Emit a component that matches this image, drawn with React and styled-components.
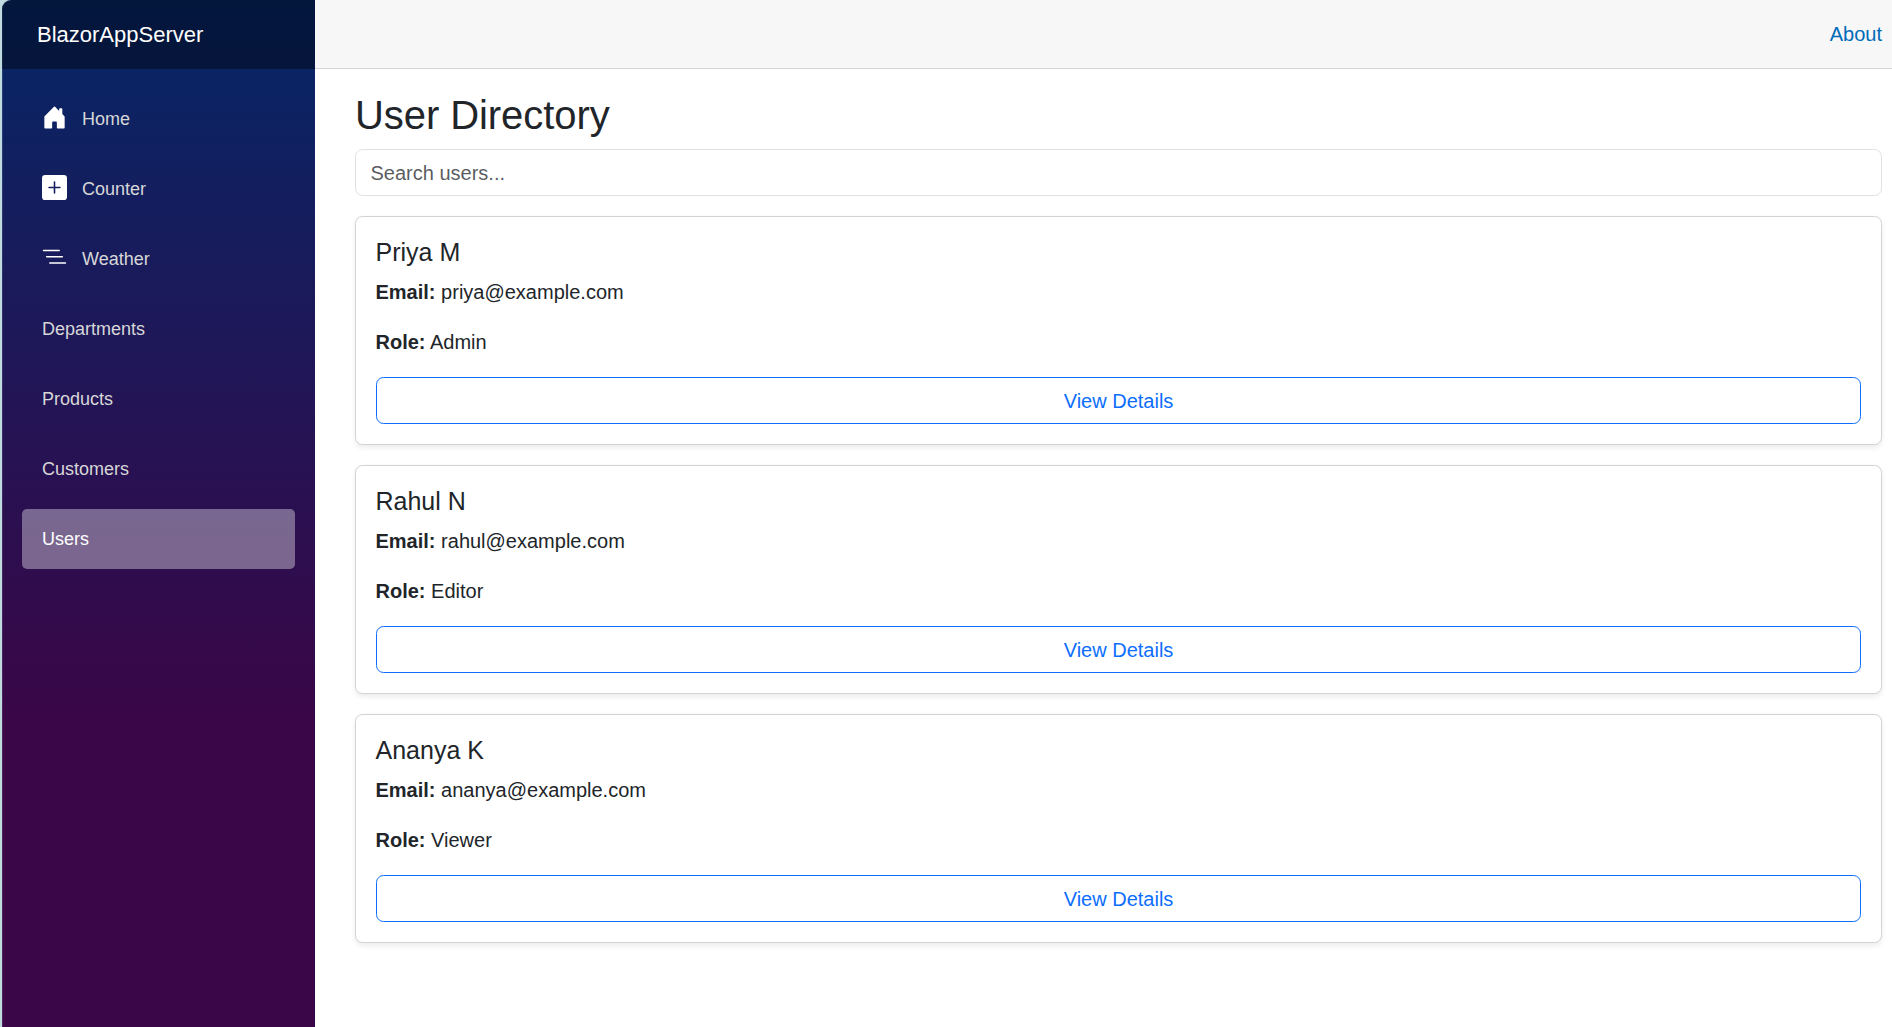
import React from "react";
import styled, { createGlobalStyle } from "styled-components";

const GlobalStyle = createGlobalStyle`
  *, *::before, *::after { box-sizing: border-box; }
  html, body { margin: 0; padding: 0; height: 100%; }
  body {
    background: #fff;
    color: #212529;
    font-family: "Liberation Sans", Arial, sans-serif;
    font-size: 20px;
    line-height: 30px;
    overflow: hidden;
  }
`;

const Page = styled.div`
  display: flex;
  height: 1027px;
  overflow: hidden;
`;

const WindowEdge = styled.div`
  width: 315px;
  flex: none;
  padding-left: 2px;
  background: #c0dbe0;
`;

const Sidebar = styled.aside`
  height: 100%;
  border-top-left-radius: 9px;
  overflow: hidden;
  background: linear-gradient(180deg, rgb(5, 39, 103) 0%, #3a0647 70%);
  box-shadow: inset 1px 0 0 rgba(255, 255, 255, 0.12);
`;

const Brand = styled.div`
  height: 69px;
  padding: 18px 0 0 35px;
  background: rgba(0, 0, 0, 0.4);
  color: #fff;
  font-size: 22px;
  line-height: 34px;
`;

const Nav = styled.nav`
  display: flex;
  flex-direction: column;
  gap: 10px;
  padding: 20px 20px 0;
`;

const NavItem = styled.a`
  display: flex;
  align-items: center;
  gap: 15px;
  height: 60px;
  padding: 0 20px;
  border-radius: 5px;
  font-size: 18px;
  color: ${(p) => (p.$active ? "#fff" : "#d7d7d7")};
  background: ${(p) => (p.$active ? "rgba(255, 255, 255, 0.37)" : "transparent")};
`;

const NavIcon = styled.svg`
  width: 25px;
  height: 25px;
  margin-top: -3px;
  fill: #fff;
`;

const Main = styled.main`
  flex: 1;
  min-width: 0;
`;

const TopRow = styled.header`
  display: flex;
  align-items: center;
  justify-content: flex-end;
  height: 69px;
  padding-right: 10px;
  background: #f7f7f7;
  border-bottom: 1px solid #d6d5d5;
`;

const AboutLink = styled.a`
  color: #006bb7;
`;

const Content = styled.article`
  padding: 22px 10px 0 40px;
`;

const Title = styled.h1`
  margin: 0 0 10px;
  font-size: 40px;
  font-weight: 400;
  line-height: 48px;
  letter-spacing: -0.07px;
`;

const Search = styled.input`
  display: block;
  width: 100%;
  height: 47px;
  margin: 0 0 20px;
  padding: 1px 15px 0 14.5px;
  border: 1px solid #dee2e6;
  border-radius: 7.5px;
  background: #fff;
  font: inherit;
  outline: none;
  &::placeholder {
    color: rgba(33, 37, 41, 0.75);
    opacity: 1;
  }
`;

const CardList = styled.div`
  display: flex;
  flex-direction: column;
  gap: 20px;
`;

const Card = styled.section`
  height: 229px;
  padding: 20px;
  border: 1px solid #d3d3d4;
  border-radius: 7.5px;
  background: #fff;
  box-shadow: 0 2.5px 5px rgba(0, 0, 0, 0.075);
`;

const Name = styled.h5`
  margin: 0 0 10px;
  font-size: 25px;
  font-weight: 400;
  line-height: 30px;
  text-indent: -0.5px;
`;

const Field = styled.p`
  margin: 0 0 20px;
  text-indent: -0.5px;
`;

const Button = styled.button`
  display: block;
  width: 100%;
  height: 47px;
  padding: 0;
  border: 1px solid #0d6efd;
  border-radius: 7.5px;
  background: transparent;
  color: #0d6efd;
  font: inherit;
`;

const icons = {
  home: "M6.5 14.5v-3.505c0-.245.25-.495.5-.495h2c.25 0 .5.25.5.5v3.5a.5.5 0 0 0 .5.5h4a.5.5 0 0 0 .5-.5v-7a.5.5 0 0 0-.146-.354L13 5.793V2.5a.5.5 0 0 0-.5-.5h-1a.5.5 0 0 0-.5.5v1.293L8.354 1.146a.5.5 0 0 0-.708 0l-6 6A.5.5 0 0 0 1.5 7.5v7a.5.5 0 0 0 .5.5h4a.5.5 0 0 0 .5-.5Z",
  plus: "M2 0a2 2 0 0 0-2 2v12a2 2 0 0 0 2 2h12a2 2 0 0 0 2-2V2a2 2 0 0 0-2-2H2zm6.5 4.5v3h3a.5.5 0 0 1 0 1h-3v3a.5.5 0 0 1-1 0v-3h-3a.5.5 0 0 1 0-1h3v-3a.5.5 0 0 1 1 0z",
  list: "M4.5 11.5A.5.5 0 0 1 5 11h10a.5.5 0 0 1 0 1H5a.5.5 0 0 1-.5-.5zm-2-4A.5.5 0 0 1 3 7h10a.5.5 0 0 1 0 1H3a.5.5 0 0 1-.5-.5zm-2-4A.5.5 0 0 1 1 3h10a.5.5 0 0 1 0 1H1a.5.5 0 0 1-.5-.5z",
};

const links = [
  { label: "Home", icon: "home" },
  { label: "Counter", icon: "plus" },
  { label: "Weather", icon: "list" },
  { label: "Departments" },
  { label: "Products" },
  { label: "Customers" },
  { label: "Users", active: true },
];

const users = [
  { name: "Priya M", email: "priya@example.com", role: "Admin" },
  { name: "Rahul N", email: "rahul@example.com", role: "Editor" },
  { name: "Ananya K", email: "ananya@example.com", role: "Viewer" },
];

export default function App() {
  return (
    <>
      <GlobalStyle />
      <Page>
        <WindowEdge>
          <Sidebar>
            <Brand>BlazorAppServer</Brand>
            <Nav>
              {links.map((l) => (
                <NavItem key={l.label} $active={l.active}>
                  {l.icon && (
                    <NavIcon viewBox="0 0 16 16">
                      <path fillRule="evenodd" d={icons[l.icon]} />
                    </NavIcon>
                  )}
                  <span>{l.label}</span>
                </NavItem>
              ))}
            </Nav>
          </Sidebar>
        </WindowEdge>
        <Main>
          <TopRow>
            <AboutLink>About</AboutLink>
          </TopRow>
          <Content>
            <Title>User Directory</Title>
            <Search placeholder="Search users..." />
            <CardList>
              {users.map((u) => (
                <Card key={u.name}>
                  <Name>{u.name}</Name>
                  <Field>
                    <strong>Email:</strong> {u.email}
                  </Field>
                  <Field>
                    <strong>Role:</strong> {u.role}
                  </Field>
                  <Button>View Details</Button>
                </Card>
              ))}
            </CardList>
          </Content>
        </Main>
      </Page>
    </>
  );
}
